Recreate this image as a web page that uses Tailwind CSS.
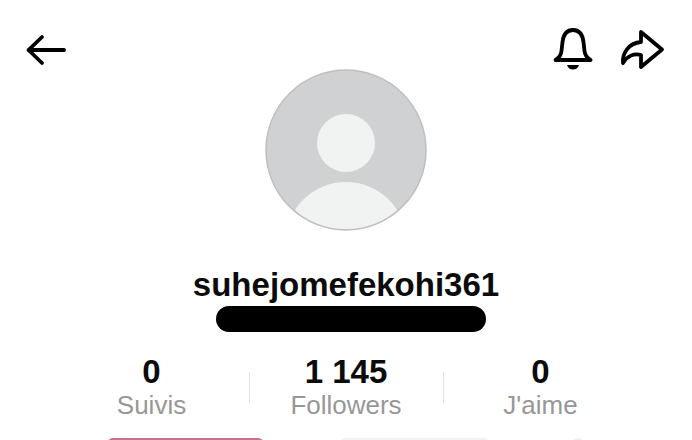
<!DOCTYPE html>
<html lang="fr">
<head>
  <meta charset="UTF-8">
  <title>Profil</title>
  <script src="https://cdn.jsdelivr.net/npm/@tailwindcss/browser@4"></script>
</head>
<body class="bg-white">
  <div class="w-[692px] h-[440px] overflow-hidden flex flex-col font-['Liberation_Sans',Arial,sans-serif]">
    <!-- top bar -->
    <header class="flex items-start justify-between h-[69px] pl-[25px] pr-[27px] shrink-0">
      <svg class="w-[42px] h-[36px] mt-[32px]" viewBox="0 0 42 36" fill="none" stroke="black" stroke-width="3.800" stroke-linecap="round" stroke-linejoin="round">
        <path d="M39 18H3.500M17 5 3.500 18 17 31"/>
      </svg>
      <div class="flex items-start gap-[27px] mt-[27px]">
        <svg class="w-[40px] h-[44px]" viewBox="0 0 40 44" fill="none" stroke="black" stroke-width="3.800" stroke-linecap="round" stroke-linejoin="round">
          <path d="M2.500 33c3.500-2 5.500-4.500 6-9l1-9C10.500 7 14 3 20 3s9.500 4 10.500 12l1 9c.5 4.500 2.500 7 6 9z"/>
          <path d="M14 38h12c-1 3-3 4.500-6 4.500s-5-1.500-6-4.500z" fill="black" stroke="none"/>
        </svg>
        <svg class="w-[45px] h-[42px] mt-[2px]" viewBox="0 0 45 42" fill="none" stroke="black" stroke-width="3.800" stroke-linecap="round" stroke-linejoin="round">
          <path d="M21 3 42 20.500 21 38V26C14 24 7 27 3 34 2 24 9 14 21 13z"/>
        </svg>
      </div>
    </header>

    <!-- avatar -->
    <div class="flex justify-center shrink-0">
      <svg class="w-[162px] h-[162px]" viewBox="0 0 162 162">
        <defs>
          <clipPath id="round"><circle cx="81" cy="81" r="79"/></clipPath>
        </defs>
        <circle cx="81" cy="81" r="80" fill="#cfd1d2" stroke="#bdbfc0" stroke-width="1.5"/>
        <g clip-path="url(#round)" fill="#f1f2f2">
          <circle cx="81" cy="74" r="29"/>
          <ellipse cx="81" cy="172" rx="60" ry="59"/>
        </g>
      </svg>
    </div>

    <!-- name -->
    <h1 class="mt-[35px] text-center text-[33px] leading-[38px] font-bold text-[#0b0b0b] shrink-0">suhejomefekohi361</h1>
    <div class="mt-[2px] ml-[216px] w-[270px] h-[26px] rounded-full bg-black shrink-0"></div>

    <!-- stats -->
    <div class="mt-[22px] flex justify-center items-center shrink-0">
      <div class="w-[194px] flex flex-col items-center">
        <span class="text-[33px] leading-[35px] font-bold text-[#0b0b0b]">0</span>
        <span class="mt-[2px] text-[26px] leading-[29px] text-[#979797]">Suivis</span>
      </div>
      <div class="w-px h-[31px] bg-[#e2e2e2]"></div>
      <div class="w-[193px] flex flex-col items-center">
        <span class="text-[33px] leading-[35px] font-bold text-[#0b0b0b]">1 145</span>
        <span class="mt-[2px] text-[26px] leading-[29px] text-[#979797]">Followers</span>
      </div>
      <div class="w-px h-[31px] bg-[#e2e2e2]"></div>
      <div class="w-[194px] flex flex-col items-center">
        <span class="text-[33px] leading-[35px] font-bold text-[#0b0b0b]">0</span>
        <span class="mt-[2px] text-[26px] leading-[29px] text-[#979797]">J'aime</span>
      </div>
    </div>

    <!-- action buttons, only their top edge is in frame -->
    <div class="mt-[18px] flex pl-[107px] shrink-0">
      <div class="w-[157px] h-[40px] rounded-t-md bg-[#c9708f]"></div>
      <div class="w-[150px] h-[40px] ml-[76px] rounded-t-md bg-[#f1f1f1]"></div>
      <div class="w-[12px] h-[40px] ml-[82px] rounded-t-md bg-[#f1f1f1]"></div>
    </div>
  </div>
</body>
</html>
